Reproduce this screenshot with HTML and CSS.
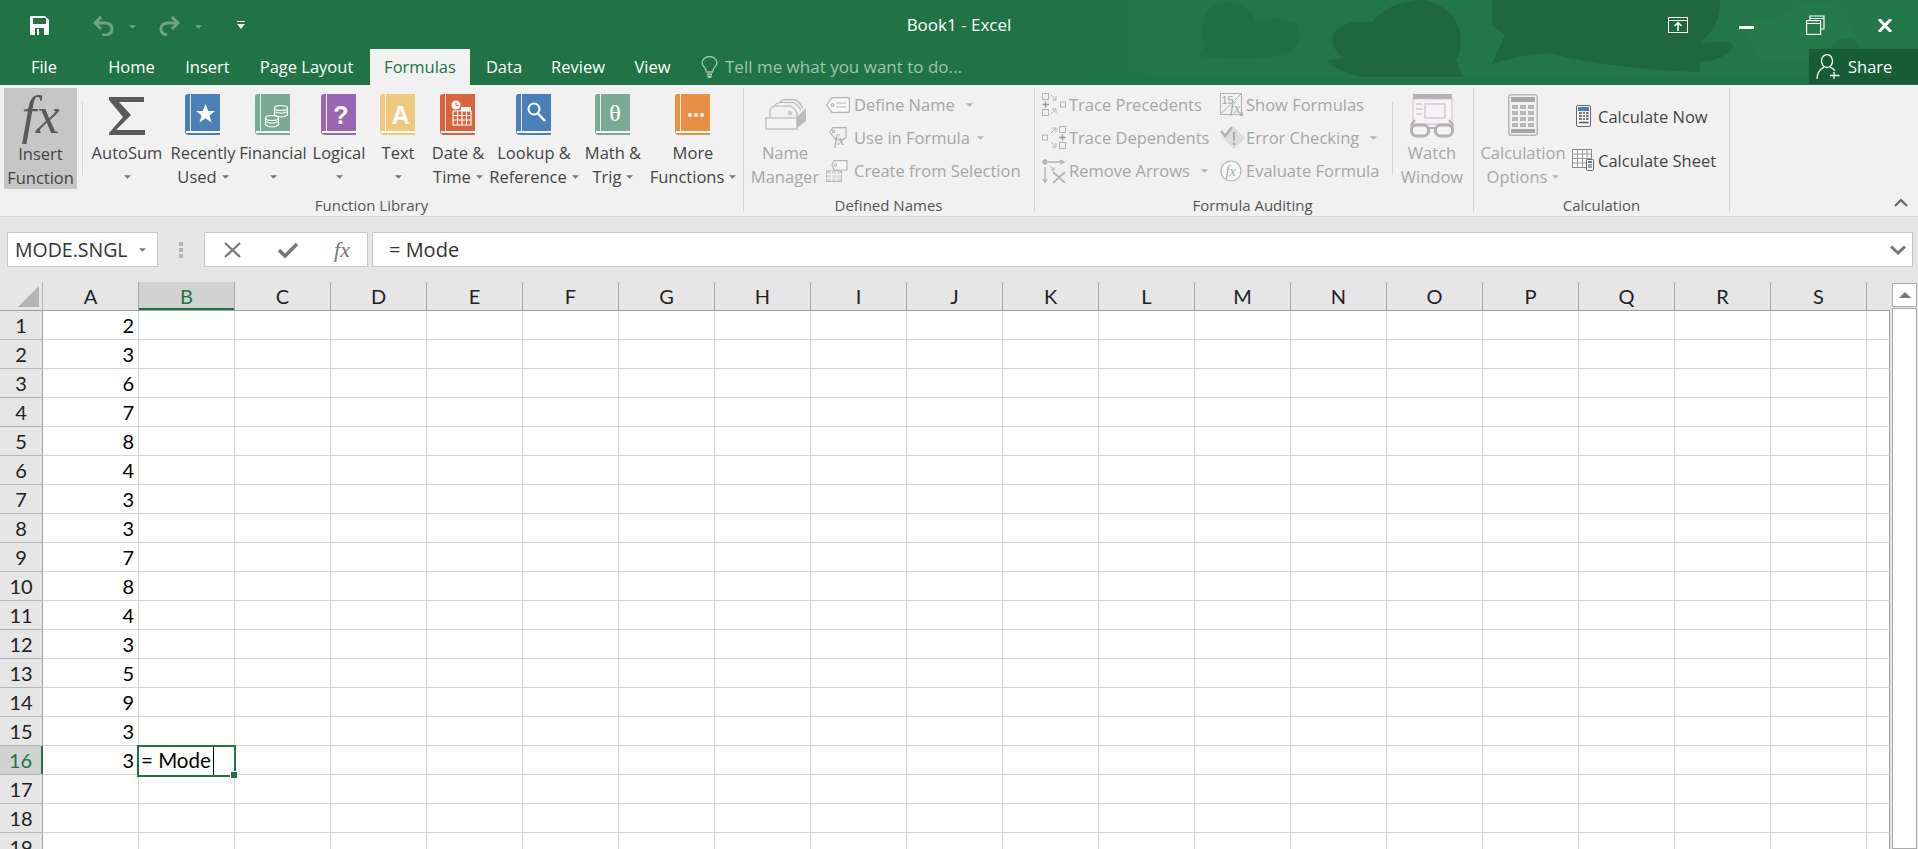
FILE: index.html

```html
<!DOCTYPE html>
<html>
<head>
	<meta charset="utf-8" />
	<title>Book1 - Excel</title>
	<link rel="stylesheet" href="styles.css">
</head>
<body>
	<svg class="defs" width="0" height="0">
		<symbol id="book" viewBox="0 0 35 41">
			<path d="M3 0H35V37H6V39H35V41H4Q0 41 0 37V3Q0 0 3 0Z" fill="currentColor"/>
			<rect x="5" y="0" width="1" height="37" fill="#fff" opacity=".85"/>
			<rect x="1" y="37" width="34" height="2" fill="#fff"/>
		</symbol>
		<symbol id="caret" viewBox="0 0 8 4">
			<path d="M0 0H8L4 4Z" fill="currentColor"/>
		</symbol>
	</svg>

	<div class="top">
		<svg class="pattern" viewBox="0 0 1918 78" width="1918" height="78">
			<defs>
				<linearGradient id="fade" x1="0" x2="1" y1="0" y2="0">
					<stop offset="0" stop-color="#22764a" stop-opacity="0"/>
					<stop offset="1" stop-color="#22764a"/>
				</linearGradient>
			</defs>
			<rect x="1050" width="150" height="78" fill="url(#fade)"/>
			<rect x="1200" width="718" height="78" fill="#22764a"/>
			<path d="M1203 25Q1205 3 1228 3Q1250 3 1255 22Q1280 15 1298 25Q1305 45 1285 55Q1240 62 1198 56L1205 45Q1198 35 1203 25Z" fill="#206f45"/>
			<path d="M1333 35Q1340 20 1372 22Q1390 0 1425 0Q1460 10 1461 40Q1460 55 1456 60L1463 77H1360Q1330 68 1327 60L1345 58Q1330 50 1333 35Z" fill="#1f673f"/>
			<path d="M1492 0H1720Q1722 25 1700 43Q1735 40 1733 47Q1725 60 1700 62L1700 72Q1620 70 1547 53Q1515 56 1492 64L1505 35L1492 25Z" fill="#1f673f"/>
			<path d="M1745 30Q1760 10 1775 22Q1800 -5 1835 5Q1860 25 1855 60H1760Z" fill="#24794b"/>
			<path d="M1830 50Q1835 38 1845 38Q1858 38 1860 50Z" fill="#206f45"/>
		</svg>

		<div class="titlebar">
			<div class="qat">
				<svg class="ic-save" width="19" height="19" viewBox="0 0 19 19"><path d="M1 0H15L19 4V18Q19 19 18 19H1Q0 19 0 18V1Q0 0 1 0Z" fill="#fff"/><rect x="3" y="2" width="13" height="6" fill="#217346"/><rect x="5" y="12" width="9" height="7" fill="#217346"/><rect x="7" y="13" width="2" height="6" fill="#fff"/></svg>
				<svg class="ic-undo" width="21" height="20" viewBox="0 0 21 20" fill="none" stroke="#6fa388" stroke-width="3"><path d="M8 1L2 7L8 13"/><path d="M3 7H13Q19 8 19 13T13 19H9"/></svg>
				<svg class="ic-dd" width="7" height="4"><use href="#caret" color="#6fa388"/></svg>
				<svg class="ic-redo" width="21" height="20" viewBox="0 0 21 20" fill="none" stroke="#6fa388" stroke-width="3"><path d="M13 1L19 7L13 13"/><path d="M18 7H8Q2 8 2 13T8 19"/></svg>
				<svg class="ic-dd" width="7" height="4"><use href="#caret" color="#6fa388"/></svg>
				<svg class="ic-custom" width="8" height="8" viewBox="0 0 8 8"><rect width="8" height="1" fill="#fff"/><path d="M0 3H8L4 8Z" fill="#fff"/></svg>
			</div>
			<div class="doc-title">Book1 - Excel</div>
			<div class="win-btns">
				<svg width="20" height="16" viewBox="0 0 20 16" fill="none" stroke="#fff"><rect x=".5" y=".5" width="19" height="15"/><path d="M0 3.500H20"/><path d="M10 14V6M6.500 9L10 5.500L13.500 9" stroke-width="1.500"/></svg>
				<svg class="ic-min" width="15" height="3"><rect width="15" height="3" fill="#fff"/></svg>
				<svg class="ic-restore" width="19" height="20" viewBox="0 0 19 20" fill="none" stroke="#fff" stroke-width="1.200"><rect x=".6" y="5.600" width="14" height="13.800"/><path d="M4 5V1H18V14H15"/><path d="M.6 8.500H14.600M4 3.500H18"/></svg>
				<svg class="ic-close" width="14" height="13" viewBox="0 0 14 13" stroke="#fff" stroke-width="3"><path d="M1 0L13 13M13 0L1 13"/></svg>
			</div>
		</div>

		<div class="tabs">
			<div class="tab tab-file">File</div>
			<div class="tab tab-home">Home</div>
			<div class="tab tab-insert">Insert</div>
			<div class="tab tab-layout">Page Layout</div>
			<div class="tab tab-formulas">Formulas</div>
			<div class="tab tab-data">Data</div>
			<div class="tab tab-review">Review</div>
			<div class="tab tab-view">View</div>
			<svg class="bulb" width="17" height="22" viewBox="0 0 17 22" fill="none" stroke="#9fc4ae" stroke-width="1.300"><path d="M5.500 16C5 11 1 10 1 7A7.500 6.500 0 0 1 16 7C16 10 12 11 11.500 16Z"/><path d="M6 18.500H11M6.500 21H10.500" stroke-width="1.800"/></svg>
			<div class="tell">Tell me what you want to do...</div>
			<div class="share">
				<svg width="24" height="25" viewBox="0 0 24 25" fill="none" stroke="#fff" stroke-width="1.300"><ellipse cx="11" cy="7" rx="5.500" ry="6.500"/><path d="M1 25Q1 17 8 13M14 13Q17 14 19 17"/><path d="M18 18V25M14 21.500H23.500"/></svg>
				<span>Share</span>
			</div>
		</div>
	</div>

	<div class="ribbon">
		<!-- Function Library -->
		<div class="group g-library">
			<div class="group-body">
				<div class="big big-insert selected">
					<div class="big-icon"><span class="fx-big">fx</span></div>
					<div class="big-text">Insert</div>
					<div class="big-text">Function</div>
				</div>
				<div class="vsep vsep-a"></div>
				<div class="big w76">
					<div class="big-icon big-icon-sigma"><svg width="36" height="38" viewBox="0 0 36 38"><path d="M0 0H35V5H10L22 18L7 33H36V38H0V36L14 20L0 3Z" fill="#595959"/></svg></div>
					<div class="big-text">AutoSum</div>
					<div class="big-text"><svg class="dd" width="7" height="4"><use href="#caret"/></svg></div>
				</div>
				<div class="big w76">
					<div class="big-icon"><svg class="bk bk-blue" width="35" height="41" viewBox="0 0 35 41"><use href="#book"/><path d="M20.500 10L23.200 17H30L24.500 21.500L26.500 28.500L20.500 24.300L14.500 28.500L16.500 21.500L11 17H17.800Z" fill="#fff"/></svg></div>
					<div class="big-text">Recently</div>
					<div class="big-text">Used<svg class="dd" width="7" height="4"><use href="#caret"/></svg></div>
				</div>
				<div class="big w64">
					<div class="big-icon"><svg class="bk bk-green" width="35" height="41" viewBox="0 0 35 41"><use href="#book"/><g fill="none" stroke="#fff" stroke-width="1.200"><ellipse cx="26" cy="14" rx="6.500" ry="2.500"/><path d="M19.500 14V21Q26 25 32.500 21V14M19.500 17.500Q26 21 32.500 17.500"/><ellipse cx="17" cy="24" rx="6.500" ry="2.500"/><path d="M10.500 24V31Q17 35 23.500 31V24M10.500 27.500Q17 31 23.500 27.500"/></g></svg></div>
					<div class="big-text">Financial</div>
					<div class="big-text"><svg class="dd" width="7" height="4"><use href="#caret"/></svg></div>
				</div>
				<div class="big w68">
					<div class="big-icon"><svg class="bk bk-purple" width="35" height="41" viewBox="0 0 35 41"><use href="#book"/><text x="20" y="30" class="bk-glyph">?</text></svg></div>
					<div class="big-text">Logical</div>
					<div class="big-text"><svg class="dd" width="7" height="4"><use href="#caret"/></svg></div>
				</div>
				<div class="big w50">
					<div class="big-icon"><svg class="bk bk-yellow" width="35" height="41" viewBox="0 0 35 41"><use href="#book"/><text x="20.500" y="30" class="bk-glyph">A</text></svg></div>
					<div class="big-text">Text</div>
					<div class="big-text"><svg class="dd" width="7" height="4"><use href="#caret"/></svg></div>
				</div>
				<div class="big w70">
					<div class="big-icon"><svg class="bk bk-red" width="35" height="41" viewBox="0 0 35 41"><use href="#book"/><circle cx="16" cy="11" r="4.500" fill="#fff"/><path d="M16 8.500V11.500H18.500" stroke="#d9623f" fill="none"/><path d="M13 17H31V31H13ZM17.500 17V31M22 17V31M26.500 17V31M13 21.500H31M13 26H31" fill="none" stroke="#fff" stroke-width="1.100"/><rect x="21" y="13" width="10" height="4" fill="#fff"/></svg></div>
					<div class="big-text">Date &amp;</div>
					<div class="big-text">Time<svg class="dd" width="7" height="4"><use href="#caret"/></svg></div>
				</div>
				<div class="big w82">
					<div class="big-icon"><svg class="bk bk-blue" width="35" height="41" viewBox="0 0 35 41"><use href="#book"/><circle cx="18" cy="15" r="5.500" fill="none" stroke="#fff" stroke-width="2"/><path d="M22 19.500L29 27" stroke="#fff" stroke-width="2.500"/></svg></div>
					<div class="big-text">Lookup &amp;</div>
					<div class="big-text">Reference<svg class="dd" width="7" height="4"><use href="#caret"/></svg></div>
				</div>
				<div class="big w76">
					<div class="big-icon"><svg class="bk bk-green" width="35" height="41" viewBox="0 0 35 41"><use href="#book"/><text x="20" y="27" class="bk-theta">θ</text></svg></div>
					<div class="big-text">Math &amp;</div>
					<div class="big-text">Trig<svg class="dd" width="7" height="4"><use href="#caret"/></svg></div>
				</div>
				<div class="big w84">
					<div class="big-icon"><svg class="bk bk-orange" width="35" height="41" viewBox="0 0 35 41"><use href="#book"/><circle cx="15" cy="21" r="2" fill="#fff"/><circle cx="21" cy="21" r="2" fill="#fff"/><circle cx="27" cy="21" r="2" fill="#fff"/></svg></div>
					<div class="big-text">More</div>
					<div class="big-text">Functions<svg class="dd" width="7" height="4"><use href="#caret"/></svg></div>
				</div>
			</div>
			<div class="group-label label-library">Function Library</div>
		</div>

		<!-- Defined Names -->
		<div class="group g-names">
			<div class="group-body">
				<div class="big w72 off">
					<div class="big-icon big-icon-low"><svg width="41" height="31" viewBox="0 0 41 31" fill="none" stroke="#b8b6b8" stroke-width="1.200"><path d="M32 29V18L41 9V22Z" fill="#bdbbbd" stroke="none"/><path d="M15 3Q17 .6 20 .6H30Q34 2 38 9"/><path d="M10 6Q12 3.500 16 3.500H28Q32 4.500 36 11"/><path d="M5 19V13Q5 8 10 7H25Q29 8 32 14V19"/><circle cx="25" cy="14" r="1.300"/><rect x="1" y="19" width="31" height="11" fill="#f6f4f6"/></svg></div>
					<div class="big-text">Name</div>
					<div class="big-text">Manager</div>
				</div>
				<div class="small-col col-names">
					<div class="small-row off">
						<span class="small-ic"><svg width="24" height="16" viewBox="0 0 24 16" fill="none" stroke="#b3b3b3" stroke-width="1.200"><path d="M6 .6H22Q23.400 .6 23.400 2V14Q23.400 15.400 22 15.400H6L.6 8Z" fill="#f8f8f8"/><circle cx="6.500" cy="8" r="1.300"/><path d="M10 6H20M10 10H20"/></svg></span>
						<span>Define Name</span><svg class="dd dd-wide" width="7" height="4"><use href="#caret"/></svg>
					</div>
					<div class="small-row off">
						<span class="small-ic ic-use"><svg width="18" height="21" viewBox="0 0 18 21" fill="none" stroke="#b3b3b3" stroke-width="1.100"><path d="M4 .6H17V11L13 13H7L.6 5Z"/><circle cx="4.500" cy="4.500" r="1.200"/><text x="5" y="18" class="fx-small">fx</text></svg></span>
						<span>Use in Formula</span><svg class="dd" width="7" height="4"><use href="#caret"/></svg>
					</div>
					<div class="small-row off">
						<span class="small-ic"><svg width="22" height="22" viewBox="0 0 22 22" fill="none" stroke="#b3b3b3" stroke-width="1.100"><path d="M8 .6H21V10H8L6 5Z" fill="#f8f8f8"/><circle cx="9.500" cy="5" r="1.200"/><rect x=".5" y="11" width="15" height="10.500" fill="#dcdcdc"/><path d="M0 14.500H16M0 18H16M5.500 11V21.500M10.500 11V21.500" stroke="#f1f1f1"/></svg></span>
						<span>Create from Selection</span>
					</div>
				</div>
			</div>
			<div class="group-label label-names">Defined Names</div>
		</div>

		<!-- Formula Auditing -->
		<div class="group g-audit">
			<div class="group-body">
				<div class="small-col col-audit1">
					<div class="small-row off">
						<span class="small-ic ic27"><svg width="24" height="23" viewBox="0 0 24 23" fill="none" stroke="#b3b3b3"><rect x=".5" y=".5" width="6" height="6"/><rect x=".5" y="16.500" width="6" height="6"/><rect x="18.500" y="9" width="5" height="5"/><path d="M.5 11.500H7M3.500 8.500V14.500" stroke="#999" stroke-width="1.300"/><path d="M9 2L14 7M14 3V7H10M9 21L14 16M14 20V16H10"/></svg></span>
						<span>Trace Precedents</span>
					</div>
					<div class="small-row off">
						<span class="small-ic ic27"><svg width="24" height="23" viewBox="0 0 24 23" fill="none" stroke="#b3b3b3"><rect x="17.500" y=".5" width="6" height="6"/><rect x="17.500" y="16.500" width="6" height="6"/><rect x=".5" y="9" width="5" height="5"/><path d="M17 11.500H23.500M20.500 8.500V14.500" stroke="#999" stroke-width="1.300"/><path d="M9 7L14 2M10 2H14V6M9 16L14 21M14 17V21H10"/></svg></span>
						<span>Trace Dependents</span>
					</div>
					<div class="small-row off">
						<span class="small-ic ic27"><svg width="24" height="24" viewBox="0 0 24 24" fill="none" stroke="#b3b3b3" stroke-width="1.300"><circle cx="3" cy="3" r="2" fill="#b3b3b3"/><path d="M6 3H21M18 1L22 3L18 5M3 8V23M1 20L3 23.500L5 20"/><path d="M11 13L23 24M23 13L11 24" stroke-width="1.700"/><path d="M8 7L12 11M12 8V11H9" stroke-width="1"/></svg></span>
						<span>Remove Arrows</span><svg class="dd dd-wide" width="7" height="4"><use href="#caret"/></svg>
					</div>
				</div>
				<div class="small-col col-audit2">
					<div class="small-row off">
						<span class="small-ic ic26"><svg width="23" height="23" viewBox="0 0 23 23" fill="none" stroke="#b3b3b3"><rect x=".5" y=".5" width="21" height="21"/><path d="M.5 21L21.500 .5"/><text x="1.500" y="11" class="num15">15</text><text x="10" y="20" class="fx-small">fx</text><rect x="20" y="20" width="3" height="3" fill="#b3b3b3"/></svg></span>
						<span>Show Formulas</span>
					</div>
					<div class="small-row off">
						<span class="small-ic ic26"><svg width="25" height="23" viewBox="0 0 25 23"><path d="M14 1L25 12L14 23L3 12Z" fill="#dcdcdc"/><path d="M12.800 6H15.200L14.700 15H13.300ZM13 16.500H15V19H13Z" fill="#a8a8a8"/><path d="M1 5L5 10L12 1" fill="none" stroke="#b3b3b3" stroke-width="2.500"/></svg></span>
						<span>Error Checking</span><svg class="dd dd-wide" width="7" height="4"><use href="#caret"/></svg>
					</div>
					<div class="small-row off">
						<span class="small-ic ic26"><svg width="22" height="22" viewBox="0 0 22 22" fill="#f8f8f8" stroke="#b3b3b3" stroke-width="1.200"><circle cx="11" cy="11" r="10"/><text x="5.500" y="16" class="fx-med">fx</text></svg></span>
						<span>Evaluate Formula</span>
					</div>
				</div>
				<div class="big w78 off">
					<div class="big-icon"><svg width="44" height="44" viewBox="0 0 44 44"><rect x="3" y="0" width="39" height="5" fill="#b3b1b3"/><rect x="3" y="5" width="39" height="25" fill="#f6f2f6" stroke="#c9c7c9"/><rect x="15" y="10" width="20" height="14" fill="none" stroke="#bdbbbd"/><path d="M6 10H12M6 15H12M6 20H12" stroke="#bdbbbd"/><path d="M0 32L5 26M44 32L39 26" stroke="#b3b1b3" stroke-width="2"/><rect x="1.500" y="31" width="17" height="11" rx="5" fill="#f6f2f6" stroke="#b3b1b3" stroke-width="3"/><rect x="25.500" y="31" width="17" height="11" rx="5" fill="#f6f2f6" stroke="#b3b1b3" stroke-width="3"/><path d="M18 34H26" stroke="#b3b1b3" stroke-width="2"/></svg></div>
					<div class="big-text">Watch</div>
					<div class="big-text">Window</div>
				</div>
			</div>
			<div class="group-label label-audit">Formula Auditing</div>
		</div>

		<!-- Calculation -->
		<div class="group g-calc">
			<div class="group-body">
				<div class="big w98 off">
					<div class="big-icon"><svg width="30" height="42" viewBox="0 0 30 42"><rect x=".75" y=".75" width="28.500" height="40.500" rx="2.500" fill="#f1f1f1" stroke="#b8b6b8" stroke-width="1.500"/><rect x="3" y="3" width="24" height="5" fill="#a9a7a9"/><g fill="#b8b6b8"><rect x="4" y="11" width="6" height="4"/><rect x="12" y="11" width="6" height="4"/><rect x="20" y="11" width="6" height="4"/><rect x="4" y="17" width="6" height="4"/><rect x="12" y="17" width="6" height="4"/><rect x="20" y="17" width="6" height="4"/><rect x="4" y="23" width="6" height="4"/><rect x="12" y="23" width="6" height="4"/><rect x="20" y="23" width="6" height="4"/><rect x="4" y="29" width="6" height="4"/><rect x="12" y="29" width="6" height="4"/><rect x="20" y="29" width="6" height="4"/></g><rect x="3" y="35" width="24" height="4" fill="#a9a7a9"/></svg></div>
					<div class="big-text">Calculation</div>
					<div class="big-text">Options<svg class="dd" width="7" height="4"><use href="#caret"/></svg></div>
				</div>
				<div class="small-col col-calc">
					<div class="small-row tall">
						<span class="small-ic ic26 ic-right"><svg width="15" height="22" viewBox="0 0 15 22"><rect x=".5" y=".5" width="14" height="21" rx="1.500" fill="#f8f8f8" stroke="#666"/><rect x="2" y="2" width="11" height="4" fill="#4a7fb8"/><path d="M3 8H6M7 8H9M10 8H12.500M3 11H6M7 11H9M10 11H12.500M3 14H6M7 14H9M10 14H12.500M3 17.500H12.500" stroke="#555" stroke-width="1.600"/></svg></span>
						<span>Calculate Now</span>
					</div>
					<div class="small-row tall">
						<span class="small-ic ic26"><svg width="22" height="22" viewBox="0 0 22 22"><rect x=".5" y=".5" width="19" height="18" fill="#fafafa" stroke="#888"/><path d="M.5 5H19.500M.5 9.500H19.500M.5 14H19.500M5.500 .5V18.500M10.500 .5V18.500M15 .5V18.500" stroke="#999"/><rect x="14.500" y="10.500" width="7" height="11" rx="1" fill="#f8f8f8" stroke="#666"/><rect x="16" y="12" width="4" height="2" fill="#4a7fb8"/><path d="M16 16H20M16 18H20" stroke="#555"/></svg></span>
						<span>Calculate Sheet</span>
					</div>
				</div>
			</div>
			<div class="group-label">Calculation</div>
		</div>

		<svg class="collapse" width="14" height="9" viewBox="0 0 14 9" fill="none" stroke="#666" stroke-width="2.200"><path d="M1 8L7 2L13 8"/></svg>
	</div>

	<div class="formula-bar">
		<div class="name-box">
			<span>MODE.SNGL</span>
			<svg width="7" height="4"><use href="#caret" color="#777"/></svg>
		</div>
		<div class="dots"><i></i><i></i><i></i></div>
		<div class="fx-box">
			<svg width="17" height="16" viewBox="0 0 17 16" stroke="#777" stroke-width="2.200"><path d="M1 1L16 15M16 1L1 15"/></svg>
			<svg width="20" height="16" viewBox="0 0 20 16" fill="none" stroke="#777" stroke-width="3.500"><path d="M1 8L7 14L19 2"/></svg>
			<span class="fx-mid">fx</span>
		</div>
		<div class="formula-input">
			<span>= Mode</span>
			<svg width="16" height="10" viewBox="0 0 16 10" fill="none" stroke="#777" stroke-width="3"><path d="M1 1.500L8 8L15 1.500"/></svg>
		</div>
	</div>

	<div class="sheet-wrap">
		<div class="sheet">
			<div class="col-heads">
				<div class="corner"><svg width="21" height="21"><path d="M21 0V21H0Z" fill="#b4b4b4"/></svg></div>
				<div class="ch">A</div>
				<div class="ch ch-on">B</div>
				<div class="ch">C</div>
				<div class="ch">D</div>
				<div class="ch">E</div>
				<div class="ch">F</div>
				<div class="ch">G</div>
				<div class="ch">H</div>
				<div class="ch">I</div>
				<div class="ch">J</div>
				<div class="ch">K</div>
				<div class="ch">L</div>
				<div class="ch">M</div>
				<div class="ch">N</div>
				<div class="ch">O</div>
				<div class="ch">P</div>
				<div class="ch">Q</div>
				<div class="ch">R</div>
				<div class="ch">S</div>
			</div>
			<div class="row"><div class="rh">1</div><div class="cell">2</div></div>
			<div class="row"><div class="rh">2</div><div class="cell">3</div></div>
			<div class="row"><div class="rh">3</div><div class="cell">6</div></div>
			<div class="row"><div class="rh">4</div><div class="cell">7</div></div>
			<div class="row"><div class="rh">5</div><div class="cell">8</div></div>
			<div class="row"><div class="rh">6</div><div class="cell">4</div></div>
			<div class="row"><div class="rh">7</div><div class="cell">3</div></div>
			<div class="row"><div class="rh">8</div><div class="cell">3</div></div>
			<div class="row"><div class="rh">9</div><div class="cell">7</div></div>
			<div class="row"><div class="rh">10</div><div class="cell">8</div></div>
			<div class="row"><div class="rh">11</div><div class="cell">4</div></div>
			<div class="row"><div class="rh">12</div><div class="cell">3</div></div>
			<div class="row"><div class="rh">13</div><div class="cell">5</div></div>
			<div class="row"><div class="rh">14</div><div class="cell">9</div></div>
			<div class="row"><div class="rh">15</div><div class="cell">3</div></div>
			<div class="row"><div class="rh rh-on">16</div><div class="cell">3</div><div class="cell-edit">= Mode<span class="text-cursor"></span></div></div>
			<div class="row"><div class="rh">17</div></div>
			<div class="row"><div class="rh">18</div></div>
			<div class="row"><div class="rh">19</div></div>
		</div>
		<div class="vscroll">
			<div class="sb-up"><svg width="12" height="6"><path d="M0 6H12L6 0Z" fill="#777"/></svg></div>
			<div class="sb-thumb"></div>
		</div>
	</div>
</body>
</html>
```

FILE: styles.css

```css
* {
  box-sizing: border-box;
}

html, body {
  margin: 0;
  padding: 0;
}

body {
  width: 1918px;
  height: 849px;
  overflow: hidden;
  display: flex;
  flex-direction: column;
  background: #e6e6e6;
  font-family: "Open Sans", "Noto Sans", sans-serif;
  color: #444;
}

.defs {
  position: absolute;
}

svg {
  display: block;
  flex: none;
}

/* TITLE BAR AND TABS */
.top {
  position: relative;
  height: 85px;
  flex: none;
  background: #217346;
  color: #fff;
}

.pattern {
  position: absolute;
  top: 0;
  left: 0;
}

.titlebar {
  position: relative;
  height: 49px;
  display: grid;
  grid-template-columns: 1fr auto 1fr;
  align-items: center;
}

.qat {
  display: flex;
  align-items: center;
  padding-left: 30px;
  margin-top: 2px;
}

.ic-undo { margin-left: 44px; }
.ic-dd { margin-left: 15px; margin-top: 2px; }
.ic-redo { margin-left: 23px; }
.ic-custom { margin-left: 35px; margin-top: -2px; }

.doc-title {
  font-size: 17px;
}

.win-btns {
  display: flex;
  align-items: center;
  justify-content: flex-end;
  padding-right: 26px;
  margin-top: 1px;
}

.ic-min { margin-left: 51px; margin-top: 5px; }
.ic-restore { margin-left: 52px; }
.ic-close { margin-left: 53px; }

.tabs {
  position: relative;
  height: 36px;
  display: flex;
  align-items: stretch;
  font-size: 16.500px;
}

.tab {
  display: flex;
  align-items: center;
  justify-content: center;
  padding-bottom: 2px;
}

.tab-file { width: 88px; }
.tab-home { width: 87px; }
.tab-insert { width: 65px; }
.tab-layout { width: 130px; padding-left: 3px; }
.tab-formulas { width: 100px; background: #f1f1f1; color: #217346; }
.tab-data { width: 68px; }
.tab-review { width: 80px; }
.tab-view { width: 69px; }

.bulb {
  align-self: center;
  margin-left: 14px;
}

.tell {
  align-self: center;
  margin-left: 7px;
  padding-bottom: 2px;
  font-size: 17px;
  color: #9fc4ae;
}

.share {
  margin-left: auto;
  width: 109px;
  height: 35px;
  display: flex;
  align-items: center;
  gap: 8px;
  padding: 0 0 1px 7px;
  background: #185c37;
}

/* RIBBON */
.ribbon {
  height: 132px;
  flex: none;
  display: flex;
  padding-top: 3px;
  background: #f1f1f1;
  border-bottom: 1px solid #d5d5d5;
  font-size: 16.500px;
}

.group {
  height: 124px;
  display: flex;
  flex-direction: column;
  border-right: 1px solid #d5d5d5;
}

.g-library { width: 744px; padding-left: 4px; }
.g-names { width: 291px; padding-left: 5px; }
.g-audit { width: 439px; padding-left: 7px; }
.g-calc { width: 256px; }

.group-body {
  height: 101px;
  display: flex;
}

.group-label {
  margin-top: 8px;
  line-height: 16px;
  font-size: 15px;
  text-align: center;
  color: #555;
}

.label-library { padding-right: 4px; }
.label-names { padding-right: 6px; }
.label-audit { padding-right: 10px; }

.big {
  height: 101px;
  flex: none;
  display: flex;
  flex-direction: column;
  align-items: center;
}

.big-icon {
  height: 54px;
  padding-top: 6px;
}

.big-icon-low {
  padding-top: 11px;
}

.big-icon-sigma {
  padding-top: 9px;
}

.big-text {
  height: 24px;
  line-height: 24px;
  display: flex;
  align-items: center;
  gap: 5px;
  white-space: nowrap;
}

.big-insert { width: 73px; background: #c6c6c6; }
.selected { color: #444; }
.w50 { width: 50px; }
.w64 { width: 64px; }
.w68 { width: 68px; }
.w70 { width: 70px; }
.w72 { width: 72px; }
.w76 { width: 76px; }
.w78 { width: 78px; }
.w82 { width: 82px; }
.w84 { width: 84px; }
.w98 { width: 98px; }

.vsep {
  width: 1px;
  flex: none;
  background: #d5d5d5;
}

.vsep-a {
  height: 73px;
  margin: 14px 6px 0 5px;
}

.off {
  color: #a6a6a6;
}

.dd {
  color: #777;
}

.off .dd {
  color: #b3b3b3;
}

.dd-wide {
  margin-left: 10px;
}

.small-row .dd {
  margin-left: 7px;
}

.small-row .dd-wide {
  margin-left: 11px;
}

.fx-big {
  display: block;
  margin-top: -9px;
  font: italic 53px "Liberation Serif", serif;
  color: #5a5a5a;
}

.bk { margin-left: -1px; }
.bk-blue { color: #4a7fb8; }
.bk-green { color: #7aaa96; }
.bk-purple { color: #9966b3; }
.bk-yellow { color: #efc980; }
.bk-red { color: #d9623f; }
.bk-orange { color: #e79046; }

.bk-glyph {
  font: bold 25px "Liberation Sans", sans-serif;
  fill: #fff;
  text-anchor: middle;
}

.bk-theta {
  font: 24px "Liberation Serif", serif;
  fill: #fff;
  text-anchor: middle;
}

.fx-small {
  font: italic 14px "Liberation Serif", serif;
  fill: #a6a6a6;
  stroke: none;
}

.fx-med {
  font: italic 14px "Liberation Serif", serif;
  fill: #a6a6a6;
  stroke: none;
}

.num15 {
  font: 11px "Liberation Sans", sans-serif;
  fill: #a6a6a6;
  stroke: none;
}

.small-col {
  display: flex;
  flex-direction: column;
  white-space: nowrap;
}

.col-names { margin-left: 5px; }
.col-audit1 { width: 178px; }

.col-audit2 {
  width: 173px;
  position: relative;
}

.col-audit2::after {
  content: "";
  position: absolute;
  top: 14px;
  right: 0;
  width: 1px;
  height: 73px;
  background: #d5d5d5;
}

.col-calc {
  padding-top: 6px;
}

.small-row {
  height: 33px;
  display: flex;
  align-items: center;
}

.tall {
  height: 44px;
}

.small-ic {
  width: 28px;
  flex: none;
}

.ic27 { width: 27px; }
.ic26 { width: 26px; }
.ic-right { padding-left: 4px; }
.ic-use { padding-left: 3px; }

.collapse {
  align-self: flex-end;
  margin: 0 10px 9px auto;
}

/* FORMULA BAR */
.formula-bar {
  height: 65px;
  flex: none;
  display: flex;
  padding: 15px 5px 0 7px;
  background: #e6e6e6;
}

.name-box, .fx-box, .formula-input {
  height: 35px;
  display: flex;
  align-items: center;
  background: #fff;
  border: 1px solid #c6c6c6;
}

.name-box {
  width: 151px;
  padding: 0 11px 0 7px;
  justify-content: space-between;
  font-size: 19.500px;
  color: #333;
}

.dots {
  width: 46px;
  height: 35px;
  display: flex;
  flex-direction: column;
  align-items: center;
  justify-content: center;
  gap: 2px;
}

.dots i {
  width: 4px;
  height: 4px;
  background: #b5b5b5;
}

.fx-box {
  width: 164px;
  padding: 0 17px 0 19px;
  justify-content: space-between;
}

.fx-mid {
  font: italic 22px "Liberation Serif", serif;
  color: #777;
}

.formula-input {
  flex: 1;
  margin-left: 4px;
  padding: 0 6px 0 16px;
  justify-content: space-between;
  font-size: 20px;
  color: #333;
}

/* GRID */
.sheet-wrap {
  flex: 1;
  min-height: 0;
  display: flex;
}

.sheet {
  width: 1890px;
  display: flex;
  flex-direction: column;
  font-family: Lato, "Open Sans", sans-serif;
  font-size: 20px;
  color: #000;
}

.col-heads {
  height: 29px;
  flex: none;
  display: flex;
  background: #e6e6e6;
  border-bottom: 1px solid #9e9e9e;
  color: #222;
}

.corner {
  width: 43px;
  padding: 4px 0 0 18px;
  border-right: 1px solid #b4b4b4;
}

.ch {
  width: 96px;
  flex: none;
  display: flex;
  align-items: center;
  justify-content: center;
  border-right: 1px solid #a8a8a8;
}

.ch-on {
  background: #d2d2d2;
  color: #217346;
  box-shadow: inset 0 -2px 0 #217346;
}

.row {
  height: 29px;
  flex: none;
  display: flex;
  border-bottom: 1px solid #d4d4d4;
  border-right: 1px solid #9e9e9e;
  background: #fff linear-gradient(90deg, transparent 95px, #d4d4d4 95px) 43px 0 / 96px 100% repeat-x;
}

.rh {
  width: 43px;
  flex: none;
  display: flex;
  align-items: center;
  justify-content: center;
  background: #e6e6e6;
  border-right: 1px solid #9e9e9e;
  box-shadow: 0 1px 0 #b4b4b4;
  color: #222;
}

.rh-on {
  background: #d2d2d2;
  color: #217346;
  border-right: 2px solid #217346;
}

.cell {
  width: 95px;
  flex: none;
  padding-right: 4px;
  line-height: 28px;
  text-align: right;
}

.cell-edit {
  position: relative;
  width: 99px;
  height: 32px;
  flex: none;
  margin: -1px 0 0 -1px;
  padding-left: 2px;
  border: 2px solid #217346;
  font-size: 20.500px;
  line-height: 27px;
  background: #fff;
  z-index: 1;
}

.cell-edit::after {
  content: "";
  position: absolute;
  right: -3px;
  bottom: -3px;
  width: 6px;
  height: 6px;
  background: #217346;
  border: 1px solid #fff;
  border-width: 1px 0 0 1px;
}

.text-cursor {
  display: inline-block;
  width: 1px;
  height: 28px;
  margin-left: 2px;
  vertical-align: top;
  background: #000;
}

/* SCROLLBAR */
.vscroll {
  flex: 1;
  display: flex;
  flex-direction: column;
  padding: 1px 1px 0 2px;
  background: #e6e6e6;
}

.sb-up {
  height: 24px;
  display: flex;
  align-items: center;
  justify-content: center;
  background: #fff;
  border: 1px solid #ababab;
}

.sb-thumb {
  flex: 1;
  margin-top: 1px;
  background: #fff;
  border: 1px solid #ababab;
}
```
